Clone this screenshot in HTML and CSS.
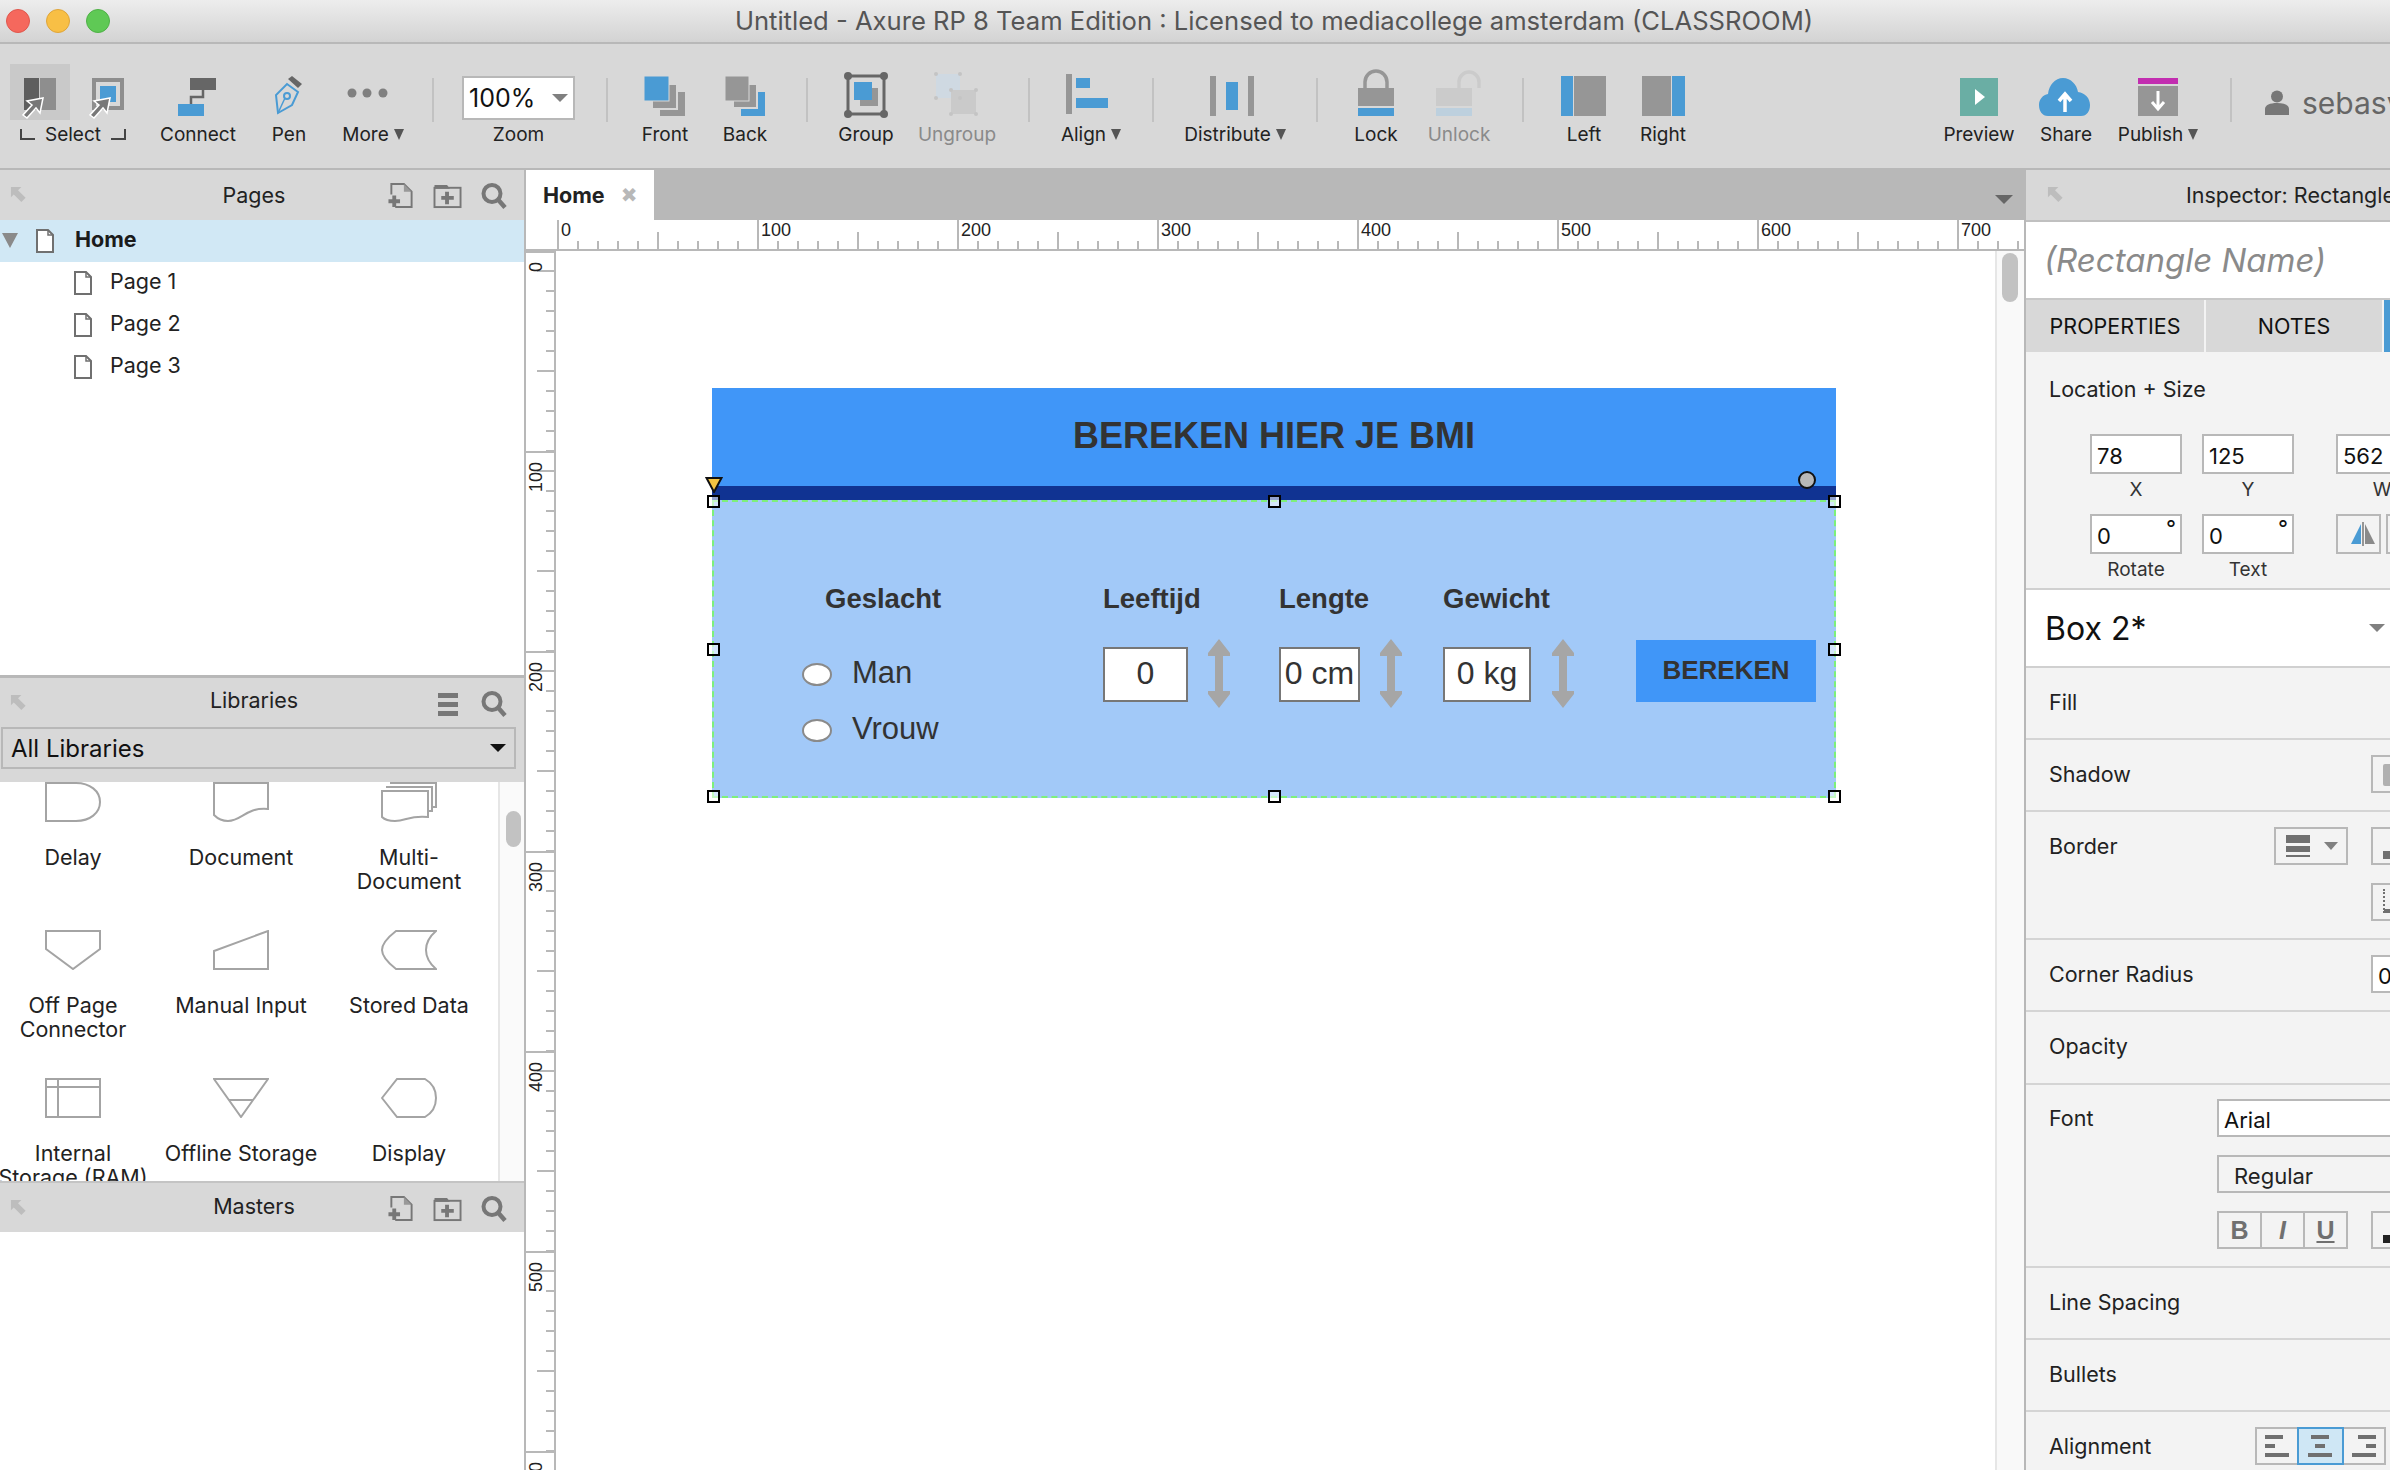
FILE: index.html
```html
<!DOCTYPE html>
<html>
<head>
    <meta charset="utf-8">
    <title>Untitled - Axure RP 8</title>
    <link rel="stylesheet" href="styles.css">
</head>
<body>
<svg class="defs" width="0" height="0">
    <symbol id="pin" viewBox="0 0 18 18"><path d="M1 1h11l-3.500 3.500 8 8-4.500 4.500-8-8L1 12z" fill="#bdbdbd"/></symbol>
    <symbol id="search" viewBox="0 0 26 26"><circle cx="11" cy="11" r="8.500" fill="none" stroke="#777" stroke-width="4"/><path d="M17 17l7 8" stroke="#777" stroke-width="4.500"/></symbol>
    <symbol id="addpage" viewBox="0 0 26 28"><path d="M3 13V2h13l8 8v16H7" fill="none" stroke="#777" stroke-width="2"/><path d="M16 2v8h8" fill="#999"/><path d="M6 14v12M0 20h12" stroke="#777" stroke-width="4"/></symbol>
    <symbol id="addfolder" viewBox="0 0 30 28"><path d="M1 3h13l3 4H1z" fill="#777"/><rect x="1" y="6" width="27" height="20" fill="none" stroke="#777" stroke-width="2"/><path d="M14 10v13M8 16.500h13" stroke="#777" stroke-width="4"/></symbol>
    <symbol id="page" viewBox="0 0 18 24"><path d="M1 1h11l5 5v17H1z" fill="#fff" stroke="#707070" stroke-width="2"/><path d="M12 1v5h5" fill="none" stroke="#707070" stroke-width="1.500"/></symbol>
    <symbol id="cursor" viewBox="0 0 24 24"><path d="M22 1l-3 15-4-5-9 10-4-3 9-10-5-4z" fill="#777" stroke="#fff" stroke-width="1.500"/></symbol>
    <symbol id="updown" viewBox="0 0 22 69"><path d="M11 0l11 14v3h-7v35h7v3L11 69 0 55v-3h7V17H0v-3z" fill="#a6a6a6"/></symbol>
</svg>

<div class="titlebar">
    <div class="lights"><i class="light red"></i><i class="light yellow"></i><i class="light green"></i></div>
    <div class="title">Untitled - Axure RP 8 Team Edition : Licensed to mediacollege amsterdam (CLASSROOM)</div>
</div>

<div class="toolbar">
    <div class="tool tool-select">
        <div class="sel-icons">
            <div class="sel-btn active">
                <svg width="60" height="56"><rect x="14" y="14" width="15" height="32" fill="#5e5e5e"/><rect x="30" y="14" width="16" height="32" fill="#8e8e8e"/><use href="#cursor" x="11" y="33" width="24" height="24"/></svg>
            </div>
            <div class="sel-btn">
                <svg width="60" height="56"><rect x="24" y="16" width="28" height="28" fill="none" stroke="#8e8e8e" stroke-width="4"/><rect x="30" y="22" width="16" height="16" fill="#4a9bd4"/><use href="#cursor" x="18" y="33" width="24" height="24"/></svg>
            </div>
        </div>
        <div class="sel-label"><i class="corner"></i><span class="tool-label">Select</span><i class="corner corner-r"></i></div>
    </div>
    <div class="tool">
        <svg width="60" height="56"><rect x="22" y="14" width="26" height="12" fill="#666"/><path d="M35 26v7H23v8" fill="none" stroke="#666" stroke-width="2.500"/><rect x="10" y="40" width="26" height="12" fill="#4a9bd4"/></svg>
        <span class="tool-label">Connect</span>
    </div>
    <div class="tool">
        <svg width="60" height="56"><path d="M19 49l-2-18 11-11 11 8-6 13z" fill="none" stroke="#4a9bd4" stroke-width="2"/><circle cx="28" cy="32" r="3" fill="none" stroke="#4a9bd4" stroke-width="2"/><path d="M19 49l7-15" stroke="#4a9bd4" stroke-width="1.500"/><path d="M29 15l4-3 10 8-4 4z" fill="#666"/></svg>
        <span class="tool-label">Pen</span>
    </div>
    <div class="tool">
        <svg width="60" height="56"><circle cx="9" cy="29" r="4.500" fill="#808080"/><circle cx="24" cy="29" r="4.500" fill="#808080"/><circle cx="40" cy="29" r="4.500" fill="#808080"/></svg>
        <span class="tool-label">More<i class="caret"></i></span>
    </div>
    <i class="sep"></i>
    <div class="tool">
        <div class="zoom-box"><span>100%</span><i class="drop"></i></div>
        <span class="tool-label">Zoom</span>
    </div>
    <i class="sep"></i>
    <div class="tool">
        <svg width="60" height="56"><rect x="25" y="28" width="25" height="24" fill="#969696"/><rect x="17" y="20" width="25" height="25" fill="#969696" stroke="#d8d8d8" stroke-width="2"/><rect x="9" y="12" width="25" height="25" fill="#4a9bd4" stroke="#d8d8d8" stroke-width="1"/></svg>
        <span class="tool-label">Front</span>
    </div>
    <div class="tool">
        <svg width="60" height="56"><rect x="26" y="28" width="24" height="24" fill="#4a9bd4"/><rect x="18" y="20" width="24" height="24" fill="#969696" stroke="#d8d8d8" stroke-width="2"/><rect x="10" y="12" width="24" height="25" fill="#969696" stroke="#d8d8d8" stroke-width="1"/></svg>
        <span class="tool-label">Back</span>
    </div>
    <i class="sep"></i>
    <div class="tool">
        <svg width="60" height="56"><rect x="24" y="24" width="18" height="18" fill="#969696"/><rect x="18" y="18" width="18" height="18" fill="#4a9bd4"/><rect x="12" y="12" width="36" height="38" fill="none" stroke="#666" stroke-width="3"/><circle cx="12" cy="12" r="4" fill="#666"/><circle cx="48" cy="12" r="4" fill="#666"/><circle cx="12" cy="50" r="4" fill="#666"/><circle cx="48" cy="50" r="4" fill="#666"/></svg>
        <span class="tool-label">Group</span>
    </div>
    <div class="tool">
        <svg width="60" height="56"><rect x="9" y="10" width="24" height="24" fill="#cfd9e2"/><rect x="24" y="26" width="25" height="24" fill="#cacaca"/><g fill="#c4c4c4"><circle cx="9" cy="10" r="2"/><circle cx="33" cy="10" r="2"/><circle cx="9" cy="34" r="2"/><circle cx="33" cy="34" r="2"/><circle cx="24" cy="26" r="2"/><circle cx="49" cy="26" r="2"/><circle cx="24" cy="50" r="2"/><circle cx="49" cy="50" r="2"/></g></svg>
        <span class="tool-label off">Ungroup</span>
    </div>
    <i class="sep"></i>
    <div class="tool">
        <svg width="60" height="56"><rect x="5" y="10" width="6" height="40" fill="#969696"/><rect x="15" y="14" width="14" height="10" fill="#4a9bd4"/><rect x="15" y="34" width="32" height="10" fill="#4a9bd4"/></svg>
        <span class="tool-label">Align<i class="caret"></i></span>
    </div>
    <i class="sep"></i>
    <div class="tool">
        <svg width="60" height="56"><rect x="5" y="12" width="6" height="40" fill="#969696"/><rect x="43" y="12" width="6" height="40" fill="#969696"/><rect x="21" y="18" width="12" height="28" fill="#4a9bd4"/></svg>
        <span class="tool-label">Distribute<i class="caret"></i></span>
    </div>
    <i class="sep"></i>
    <div class="tool">
        <svg width="60" height="56"><path d="M19 26V18a11 11 0 0 1 22 0v8" fill="none" stroke="#969696" stroke-width="3.500"/><rect x="12" y="24" width="36" height="18" fill="#969696"/><rect x="12" y="44" width="36" height="8" fill="#4a9bd4"/></svg>
        <span class="tool-label">Lock</span>
    </div>
    <div class="tool">
        <svg width="60" height="56"><path d="M30 26V18a10 10 0 0 1 20 0v6" fill="none" stroke="#cbcbcb" stroke-width="3.500"/><rect x="7" y="24" width="36" height="18" fill="#cbcbcb"/><rect x="7" y="44" width="36" height="8" fill="#bdd0de"/></svg>
        <span class="tool-label off">Unlock</span>
    </div>
    <i class="sep"></i>
    <div class="tool">
        <svg width="60" height="56"><rect x="7" y="12" width="12" height="40" fill="#4a9bd4"/><rect x="20" y="12" width="32" height="40" fill="#969696"/></svg>
        <span class="tool-label">Left</span>
    </div>
    <div class="tool">
        <svg width="60" height="56"><rect x="9" y="12" width="29" height="40" fill="#969696"/><rect x="39" y="12" width="13" height="40" fill="#4a9bd4"/></svg>
        <span class="tool-label">Right</span>
    </div>
    <div></div>
    <div class="tool">
        <svg width="60" height="56"><rect x="11" y="14" width="38" height="38" fill="#6aaea4"/><path d="M26 25l10 8-10 8z" fill="#fff"/></svg>
        <span class="tool-label">Preview</span>
    </div>
    <div class="tool">
        <svg width="60" height="56"><path d="M12 52C6 52 3 47 3 41c0-6 4-10 9-11 1-9 7-16 15-16 8 0 14 7 15 14 7 1 12 6 12 13 0 6-3 11-9 11z" fill="#4a9bd4"/><path d="M29 48V32M23 37l6-7 6 7" fill="none" stroke="#fff" stroke-width="3.500"/></svg>
        <span class="tool-label">Share</span>
    </div>
    <div class="tool">
        <svg width="60" height="56"><rect x="10" y="14" width="40" height="6" fill="#c22db0"/><rect x="10" y="22" width="40" height="30" fill="#969696"/><path d="M30 27v18M24 38l6 7 6-7" fill="none" stroke="#fff" stroke-width="3"/></svg>
        <span class="tool-label">Publish<i class="caret"></i></span>
    </div>
    <i class="sep"></i>
    <div class="user">
        <svg width="26" height="26" viewBox="0 0 26 26"><circle cx="13" cy="6.500" r="6" fill="#777"/><path d="M1 25v-6c0-4 5-6 12-6s12 2 12 6v6z" fill="#777"/></svg>
        <span>sebasv</span>
    </div>
</div>

<div class="main">
    <div class="left">
        <div class="panel-head">
            <svg class="pin"><use href="#pin"/></svg>
            <span class="panel-title">Pages</span>
            <svg class="hd-ico ico-a"><use href="#addpage"/></svg>
            <svg class="hd-ico ico-b"><use href="#addfolder"/></svg>
            <svg class="hd-ico ico-c"><use href="#search"/></svg>
        </div>
        <div class="pages">
            <div class="page-row home"><i class="tree-arrow"></i><svg class="page-ico"><use href="#page"/></svg><b>Home</b></div>
            <div class="page-row sub"><svg class="page-ico"><use href="#page"/></svg>Page 1</div>
            <div class="page-row sub"><svg class="page-ico"><use href="#page"/></svg>Page 2</div>
            <div class="page-row sub"><svg class="page-ico"><use href="#page"/></svg>Page 3</div>
        </div>

        <div class="panel-head lib-head">
            <svg class="pin"><use href="#pin"/></svg>
            <span class="panel-title">Libraries</span>
            <div class="burger hd-ico ico-b"><i></i><i></i><i></i></div>
            <svg class="hd-ico ico-c"><use href="#search"/></svg>
        </div>
        <div class="lib-select-wrap">
            <div class="lib-select">All Libraries<i class="blackdrop"></i></div>
        </div>
        <div class="lib-list">
            <div class="lib-grid">
                <div class="lib-item">
                    <svg width="56" height="40"><path d="M1 1h30c14 0 24 8 24 19s-10 19-24 19H1z" class="shape"/></svg>
                    <span>Delay</span>
                </div>
                <div class="lib-item">
                    <svg width="56" height="40"><path d="M1 1h54v26c-22-2-26 12-40 12-6 0-10-2-14-6z" class="shape"/></svg>
                    <span>Document</span>
                </div>
                <div class="lib-item">
                    <svg width="56" height="40"><path d="M9 1h46v24h-4M5 5h46v24h-4" class="shape"/><path d="M1 9h46v26c-18-2-22 4-33 4-6 0-10-1-13-4z" class="shape"/></svg>
                    <span>Multi-<br>Document</span>
                </div>
                <div class="lib-item">
                    <svg width="56" height="40"><path d="M1 1h54v18L28 39 1 19z" class="shape"/></svg>
                    <span>Off Page<br>Connector</span>
                </div>
                <div class="lib-item">
                    <svg width="56" height="40"><path d="M1 21L55 1v38H1z" class="shape"/></svg>
                    <span>Manual Input</span>
                </div>
                <div class="lib-item">
                    <svg width="56" height="40"><path d="M55 1H15C6 8 1 14 1 20s5 12 14 19h40c-7-6-10-12-10-19s3-13 10-19z" class="shape"/></svg>
                    <span>Stored Data</span>
                </div>
                <div class="lib-item">
                    <svg width="56" height="40"><path d="M1 1h54v38H1zM1 9h54M13 1v38" class="shape"/></svg>
                    <span>Internal<br>Storage (RAM)</span>
                </div>
                <div class="lib-item">
                    <svg width="56" height="40"><path d="M1 1h54L28 39zM16 22h24" class="shape"/></svg>
                    <span>Offline Storage</span>
                </div>
                <div class="lib-item">
                    <svg width="56" height="40"><path d="M1 20L16 1h28c7 4 11 11 11 19s-4 15-11 19H16z" class="shape"/></svg>
                    <span>Display</span>
                </div>
            </div>
            <div class="lib-scroll"><i></i></div>
        </div>

        <div class="panel-head mast-head">
            <svg class="pin"><use href="#pin"/></svg>
            <span class="panel-title">Masters</span>
            <svg class="hd-ico ico-a"><use href="#addpage"/></svg>
            <svg class="hd-ico ico-b"><use href="#addfolder"/></svg>
            <svg class="hd-ico ico-c"><use href="#search"/></svg>
        </div>
    </div>

    <div class="center">
        <div class="tabbar">
            <div class="tab"><b>Home</b><span class="tab-x">&#10006;</span></div>
            <i class="tab-drop"></i>
        </div>
        <div class="hruler">
            <div class="ruler-corner"></div>
            <div class="hmarks">
                <div class="hmark">0</div><div class="hmark">100</div><div class="hmark">200</div><div class="hmark">300</div>
                <div class="hmark">400</div><div class="hmark">500</div><div class="hmark">600</div><div class="hmark">700</div>
            </div>
        </div>
        <div class="work">
            <div class="vruler">
                <div class="vmark"><span>0</span></div><div class="vmark"><span>100</span></div><div class="vmark"><span>200</span></div>
                <div class="vmark"><span>300</span></div><div class="vmark"><span>400</span></div><div class="vmark"><span>500</span></div><div class="vmark"><span>600</span></div>
            </div>
            <div class="canvas">
                <div class="artboard">
                    <div class="bmi-head">BEREKEN HIER JE BMI</div>
                    <div class="bmi-bar"></div>
                    <div class="bmi-box">
                        <div class="w-label l-gender">Geslacht</div>
                        <div class="w-label l-age">Leeftijd</div>
                        <div class="w-label l-len">Lengte</div>
                        <div class="w-label l-wgt">Gewicht</div>
                        <i class="w-radio r-man"></i><div class="w-opt o-man">Man</div>
                        <i class="w-radio r-vrouw"></i><div class="w-opt o-vrouw">Vrouw</div>
                        <div class="w-input i-age">0</div>
                        <div class="w-input i-len">0 cm</div>
                        <div class="w-input i-wgt">0 kg</div>
                        <svg class="w-arrow a-age"><use href="#updown"/></svg>
                        <svg class="w-arrow a-len"><use href="#updown"/></svg>
                        <svg class="w-arrow a-wgt"><use href="#updown"/></svg>
                        <div class="w-button">BEREKEN</div>
                        <i class="handle h-tl"></i><i class="handle h-tm"></i><i class="handle h-tr"></i>
                        <i class="handle h-ml"></i><i class="handle h-mr"></i>
                        <i class="handle h-bl"></i><i class="handle h-bm"></i><i class="handle h-br"></i>
                    </div>
                    <svg class="mark-tri" width="18" height="16"><path d="M1.500 1h15L9 15z" fill="#f4c542" stroke="#111" stroke-width="2"/></svg>
                    <i class="mark-dot"></i>
                </div>
                <div class="canvas-scroll"><i></i></div>
            </div>
        </div>
    </div>

    <div class="right">
        <div class="panel-head insp-head">
            <svg class="pin"><use href="#pin"/></svg>
            <span class="insp-title">Inspector: Rectangle</span>
        </div>
        <div class="name-row">(Rectangle Name)</div>
        <div class="tabs">
            <div class="itab t-prop">PROPERTIES</div>
            <div class="itab t-notes">NOTES</div>
            <div class="itab t-style"></div>
        </div>
        <div class="loc">
            <div class="loc-title">Location + Size</div>
            <div class="loc-grid">
                <div class="field"><div class="box-in">78</div><span>X</span></div>
                <div class="field"><div class="box-in">125</div><span>Y</span></div>
                <div class="field"><div class="box-in">562</div><span>W</span></div>
                <div class="field"><div class="box-in">0<sup>&#176;</sup></div><span>Rotate</span></div>
                <div class="field"><div class="box-in">0<sup>&#176;</sup></div><span>Text</span></div>
                <div class="field flip-pair">
                    <div class="icon-btn flip"><svg width="24" height="24"><path d="M10 2v20H0z" fill="#4a9bd4"/><path d="M14 2v20h10z" fill="#8a8a8a"/><path d="M12 0v24" stroke="#777" stroke-width="1.500"/></svg></div>
                    <div class="icon-btn"></div>
                </div>
            </div>
        </div>
        <div class="style-row"><span>Box 2*</span><i class="drop"></i></div>

        <div class="sec"><span class="sec-name">Fill</span></div>
        <div class="sec"><span class="sec-name">Shadow</span>
            <div class="icon-btn c-far"><i class="shadow-ico"></i></div>
        </div>
        <div class="sec sec-border"><span class="sec-name">Border</span>
            <div class="icon-btn border-drop c-mid">
                <span class="lines"><i class="l1"></i><i class="l2"></i><i class="l3"></i></span><i class="drop"></i>
            </div>
            <div class="icon-btn c-far"><i class="pen-ico"></i></div>
            <div class="icon-btn c-far row2"><i class="dots-ico"></i></div>
        </div>
        <div class="sec"><span class="sec-name">Corner Radius</span>
            <div class="box-in c-far radius">0</div>
        </div>
        <div class="sec sec-opacity"><span class="sec-name">Opacity</span></div>
        <div class="sec sec-font"><span class="sec-name">Font</span>
            <div class="font-col">
                <div class="box-in font-name">Arial</div>
                <div class="box-in font-style">Regular</div>
                <div class="font-btns">
                    <div class="biu">
                        <div class="biu-b">B</div>
                        <div class="biu-i">I</div>
                        <div class="biu-u">U</div>
                    </div>
                    <div class="icon-btn color-btn"><i class="pen-ico dark"></i></div>
                </div>
            </div>
        </div>
        <div class="sec"><span class="sec-name">Line Spacing</span></div>
        <div class="sec"><span class="sec-name">Bullets</span></div>
        <div class="sec sec-last"><span class="sec-name">Alignment</span>
            <div class="align-btns">
                <div class="al al-l"><i class="w1"></i><i class="w2"></i><i class="w3"></i></div>
                <div class="al al-c on"><i class="w1"></i><i class="w2"></i><i class="w3"></i></div>
                <div class="al al-r"><i class="w1"></i><i class="w2"></i><i class="w3"></i></div>
            </div>
        </div>
    </div>
</div>
</body>
</html>
```

FILE: styles.css
```css
*{box-sizing:border-box;}
html,body{margin:0;padding:0;height:100%;}
body{width:2390px;height:1470px;overflow:hidden;background:#fff;font-family:Inter,"Noto Sans",sans-serif;font-size:21.500px;color:#222;}
i{font-style:normal;display:block;}
.defs{position:absolute;}

/* title bar */
.titlebar{height:44px;display:flex;align-items:center;position:relative;background:linear-gradient(#ededed,#d3d3d3);border-bottom:2px solid #b8b8b8;}
.lights{display:flex;gap:16px;padding-left:6px;}
.light{width:24px;height:24px;border-radius:50%;}
.red{background:#f5685d;border:1px solid #e0574d;}
.yellow{background:#f8bf45;border:1px solid #dfa53a;}
.green{background:#5fc955;border:1px solid #4fb147;}
.title{position:absolute;left:0;right:-158px;text-align:center;font-size:25.600px;color:#555;line-height:42px;}

/* toolbar */
.toolbar{height:126px;padding:20px 0 0 10px;background:#d8d8d8;border-bottom:2px solid #b8b8b8;display:grid;align-items:start;
    grid-template-columns:136px 104px 78px 90px 30px 141px 36px 80px 80px 44px 74px 108px 36px 88px 36px 128px 36px 82px 84px 44px 78px 80px 222px 108px 66px 118px 28px 200px;}
.tool{display:flex;flex-direction:column;align-items:center;}
.tool>svg{display:block;}
.tool-label{display:flex;align-items:center;height:28px;font-size:19px;color:#222;white-space:nowrap;}
.tool-label.off{color:#8a8a8a;}
.caret{width:0;height:0;margin-left:5px;border-left:5px solid transparent;border-right:5px solid transparent;border-top:11px solid #555;}
.sep{width:2px;height:44px;margin:14px auto 0;background:#c2c2c2;}
.tool-select{align-items:flex-start;}
.sel-icons{display:flex;}
.sel-btn{width:60px;height:56px;}
.sel-btn.active{background:#c9c9c9;}
.sel-label{display:flex;align-items:center;gap:10px;padding-left:10px;}
.corner{width:15px;height:11px;border-left:2px solid #444;border-bottom:2px solid #444;}
.corner-r{border-left:0;border-right:2px solid #444;}
.zoom-box{width:113px;height:44px;margin:12px 0 0;background:#fff;border:2px solid #b8b8b8;display:flex;align-items:center;justify-content:space-between;padding:0 5px;font-size:25px;color:#111;}
.drop{width:0;height:0;border-left:8px solid transparent;border-right:8px solid transparent;border-top:8px solid #808080;}
.user{display:flex;align-items:center;gap:12px;margin:21px 0 0 19px;font-size:30px;color:#666;white-space:nowrap;}
.user svg{flex:none;}

/* main layout */
.main{display:flex;height:1300px;}
.left{width:526px;flex:none;border-right:2px solid #b8b8b8;}
.center{width:1498px;flex:none;display:flex;flex-direction:column;}
.right{width:366px;flex:none;border-left:2px solid #b8b8b8;background:#f3f3f3;overflow:hidden;}

/* panels */
.panel-head{height:50px;background:#d8d8d8;position:relative;display:flex;align-items:center;justify-content:center;}
.pin{position:absolute;left:10px;top:16px;width:17px;height:17px;}
.panel-title{font-size:21.500px;color:#222;margin-right:16px;}
.hd-ico{position:absolute;top:12px;width:26px;height:27px;}
.ico-a{left:388px;}
.ico-b{left:433px;width:30px;}
.ico-c{left:481px;}
.pages{height:455px;}
.page-row{height:42px;display:flex;align-items:center;font-size:21.500px;padding-bottom:4px;}
.page-row.home{background:#d1e8f5;padding-left:2px;color:#1b1b1b;}
.page-row.sub{height:42px;padding-left:74px;}
.page-row b{margin-left:21px;}
.page-ico{width:18px;height:24px;margin:3px 18px 0 0;flex:none;}
.home .page-ico{margin:3px 0 0;}
.tree-arrow{width:0;height:0;margin:3px 18px 0 0;border-left:8px solid transparent;border-right:8px solid transparent;border-top:15px solid #8a8a8a;}
.lib-head{border-top:3px solid #b8b8b8;height:49px;padding-bottom:3px;}
.lib-select-wrap{height:58px;background:#d8d8d8;padding:3px 8px 0 1px;}
.lib-select{height:42px;border:2px solid #b8b8b8;display:flex;align-items:center;justify-content:space-between;padding:0 8px;font-size:24px;color:#111;}
.blackdrop{width:0;height:0;border-left:8px solid transparent;border-right:8px solid transparent;border-top:8px solid #111;}
.lib-list{height:399px;display:flex;overflow:hidden;background:#fff;}
.lib-grid{width:509px;margin-left:-11px;flex:none;display:grid;grid-template-columns:168px 168px 168px;grid-auto-rows:148px;}
.lib-item{display:flex;flex-direction:column;align-items:center;text-align:center;font-size:21.500px;line-height:24px;color:#222;white-space:nowrap;}
.lib-item svg{display:block;margin-bottom:23px;flex:none;}
.shape{fill:none;stroke:#a4a4a4;stroke-width:2;}
.lib-scroll{width:26px;flex:none;background:#fafafa;border-left:2px solid #e6e6e6;padding:29px 0 0 6px;}
.lib-scroll i{width:15px;height:36px;border-radius:8px;background:#c2c2c2;}
.mast-head{border-top:2px solid #c4c4c4;height:51px;padding-bottom:3px;}
.burger i{height:5px;width:20px;margin:0 0 4px 5px;background:#777;}
.burger{padding-top:3px;}

/* tab bar and rulers */
.tabbar{height:50px;flex:none;background:#b8b8b8;display:flex;align-items:center;border-top:0;}
.tab{width:128px;height:50px;background:#fff;display:flex;align-items:center;padding-left:17px;font-size:21.500px;color:#222;}
.tab b{flex:none;}
.tab-x{margin-left:16px;color:#b8b8b8;font-size:20px;font-family:"DejaVu Sans",sans-serif;}
.tab-drop{width:0;height:0;margin:8px 11px 0 auto;border-left:9px solid transparent;border-right:9px solid transparent;border-top:9px solid #666;}
.hruler{height:31px;flex:none;display:flex;}
.ruler-corner{width:31px;flex:none;border-bottom:2px solid #b8b8b8;}
.hmarks{flex:1;display:flex;overflow:hidden;border-bottom:2px solid #b8b8b8;
    background:repeating-linear-gradient(90deg,#b8b8b8 0 2px,transparent 2px 20px) left bottom/100% 8px no-repeat,repeating-linear-gradient(90deg,#b8b8b8 0 2px,transparent 2px 100px) left bottom/100% 17px no-repeat;}
.hmark{width:200px;flex:none;border-left:2px solid #b8b8b8;padding-left:2px;font-family:"Liberation Sans",sans-serif;font-size:18px;line-height:20px;color:#222;}
.work{flex:1;display:flex;min-height:0;}
.vruler{width:30px;flex:none;border-right:2px solid #b8b8b8;overflow:hidden;padding-left:0;
    background:repeating-linear-gradient(0deg,transparent 0 18px,#b8b8b8 18px 20px) right top/8px 100% no-repeat,repeating-linear-gradient(0deg,transparent 0 98px,#b8b8b8 98px 100px) right top/17px 100% no-repeat;}
.vmark{height:200px;border-top:2px solid #b8b8b8;padding:9px 0 0 1px;}
.vmark span{display:block;width:18px;writing-mode:vertical-rl;transform:rotate(180deg);font-family:"Liberation Sans",sans-serif;font-size:18px;line-height:18px;color:#222;}

/* canvas, widgets sit at their own coordinates */
.canvas{flex:1;position:relative;background:#fff;overflow:hidden;}
.artboard{position:absolute;left:156px;top:137px;width:1124px;color:#333;font-family:"Liberation Sans",Arial,sans-serif;}
.bmi-head{height:98px;background:#4096f8;font-size:36px;font-weight:bold;line-height:96px;text-align:center;}
.bmi-bar{height:14px;background:#103392;}
.bmi-box{height:298px;position:relative;background:#a2c9f8;border:2px dashed #7ef07a;}
.w-label{position:absolute;top:81px;font-size:27.500px;line-height:32px;font-weight:bold;}
.l-gender{left:111px;}
.l-age{left:389px;}
.l-len{left:565px;}
.l-wgt{left:729px;}
.w-radio{position:absolute;left:88px;width:30px;height:23px;border-radius:50%;background:#fff;border:2px solid #8a8a8a;}
.r-man{top:161px;}
.r-vrouw{top:217px;}
.w-opt{position:absolute;font-size:31px;line-height:34px;}
.o-man{left:138px;top:154px;}
.o-vrouw{left:138px;top:210px;}
.w-input{position:absolute;top:145px;height:55px;background:#fff;border:2px solid #777;font-size:32px;line-height:49px;text-align:center;white-space:nowrap;}
.i-age{left:389px;width:85px;}
.i-len{left:565px;width:81px;}
.i-wgt{left:729px;width:88px;}
.w-arrow{position:absolute;top:137px;width:22px;height:69px;}
.a-age{left:494px;}
.a-len{left:666px;}
.a-wgt{left:838px;}
.w-button{position:absolute;left:922px;top:138px;width:180px;height:62px;background:#4096f8;font-size:26px;font-weight:bold;line-height:60px;text-align:center;}
.handle{position:absolute;width:13px;height:13px;margin:-6.500px 0 0 -6.500px;border:2px solid #000;background:rgba(255,255,255,.55);}
.h-tl{left:-1px;top:-1px;}
.h-tm{left:50%;top:-1px;}
.h-tr{left:100%;top:-1px;}
.h-ml{left:-1px;top:50%;}
.h-mr{left:100%;top:50%;}
.h-bl{left:-1px;top:100%;}
.h-bm{left:50%;top:100%;}
.h-br{left:100%;top:100%;}
.mark-tri{position:absolute;left:-7px;top:89px;}
.mark-dot{position:absolute;left:1086px;top:83px;width:18px;height:18px;border-radius:50%;background:#b8b8b8;border:2px solid #111;}
.canvas-scroll{position:absolute;right:0;top:0;bottom:0;width:29px;background:#f9f9f9;border-left:2px solid #e6e6e6;padding:2px 0 0 5px;}
.canvas-scroll i{width:16px;height:49px;border-radius:8px;background:#c2c2c2;}

/* inspector */
.insp-head{height:52px;border-bottom:2px solid #c0c0c0;justify-content:flex-start;width:500px;}
.insp-head .pin{left:21px;}
.insp-title{margin-left:160px;font-size:21.500px;color:#222;white-space:nowrap;}
.name-row{height:78px;background:#fff;border-bottom:2px solid #c8c8c8;padding-left:18px;font-size:33px;font-style:italic;line-height:76px;color:#8a8a8a;white-space:nowrap;}
.tabs{height:52px;display:flex;gap:2px;width:500px;}
.itab{background:#d8d8d8;text-align:center;font-size:21.500px;line-height:52px;color:#111;}
.t-prop{width:178px;}
.t-notes{width:176px;}
.t-style{width:100px;background:#4a9bd4;}
.loc{height:238px;padding:22px 0 0 23px;width:500px;border-bottom:2px solid #d0d0d0;}
.loc-title{font-size:21.500px;line-height:30px;}
.loc-grid{display:grid;grid-template-columns:112px 134px 112px;grid-auto-rows:80px;margin:30px 0 0 41px;}
.field{text-align:center;width:92px;font-size:19px;line-height:32px;color:#333;}
.box-in{height:40px;background:#fff;border:2px solid #b8b8b8;padding-left:5px;font-size:22px;line-height:38px;color:#111;text-align:left;white-space:nowrap;}
.field .box-in{line-height:40px;}
.box-in sup{float:right;margin-right:4px;font-size:22px;line-height:24px;}
.flip-pair{display:flex;gap:5px;width:200px;}
.icon-btn{width:45px;height:40px;border:2px solid #b8b8b8;flex:none;}
.flip{padding:6px 0 0 9px;}
.style-row{height:78px;width:364px;background:#fff;border-bottom:2px solid #d0d0d0;display:flex;align-items:center;justify-content:space-between;padding:0 5px 0 19px;font-size:32px;color:#111;}

.sec{height:72px;width:500px;padding:15px 0 0 23px;border-bottom:2px solid #d4d4d4;display:grid;grid-template-columns:168px 57px 97px 160px;grid-auto-rows:38px;row-gap:18px;font-size:21.500px;line-height:38px;color:#222;}
.sec-name{grid-column:1;}
.c-mid{grid-column:3;grid-row:1;height:38px;}
.c-far{grid-column:4;grid-row:1;height:38px;width:60px;}
.c-far.row2{grid-row:2;}
.sec-border{height:128px;}
.sec-opacity{height:73px;}
.sec-font{height:183px;padding-top:14px;}
.sec-last{border-bottom:0;}
.radius{padding-left:5px;}
.shadow-ico{width:30px;height:22px;margin:7px 0 0 10px;background:#b0b0b0;border-radius:2px;}
.border-drop{width:74px;display:flex;align-items:center;gap:14px;padding-left:10px;}
.lines i{background:#707070;width:24px;}
.lines .l1{height:8px;}
.lines .l2{height:6px;margin-top:3px;}
.lines .l3{height:2px;margin-top:3px;}
.border-drop .drop{border-left-width:7px;border-right-width:7px;}
.pen-ico{width:30px;height:8px;margin:22px 0 0 10px;background:#707070;}
.pen-ico.dark{background:#222;margin-left:10px;}
.dots-ico{width:30px;height:24px;margin:4px 0 0 10px;border-left:2px dotted #707070;border-bottom:4px solid #707070;}
.font-col{grid-column:2 / 5;grid-row:1;display:flex;flex-direction:column;gap:18px;}
.font-name{height:38px;padding-left:5px;}
.font-style{height:38px;padding-left:15px;background:#f3f3f3;color:#222;}
.font-btns{display:flex;gap:23px;}
.biu{display:flex;width:131px;height:38px;border:2px solid #b8b8b8;}
.biu div{flex:1;text-align:center;font-family:"Liberation Sans",sans-serif;color:#707070;font-size:25px;line-height:34px;border-right:2px solid #b8b8b8;}
.biu div:last-child{border-right:0;}
.biu-b{font-weight:bold;font-size:27px;}
.biu-i{font-style:italic;font-family:"Liberation Serif",serif;font-weight:bold;}
.biu-u{text-decoration:underline;font-weight:bold;font-size:21px;}
.color-btn{height:38px;width:60px;}
.align-btns{grid-column:2 / 5;display:flex;margin-left:38px;height:38px;width:131px;border:2px solid #b8b8b8;}
.al{flex:1;padding:6px 8px 0;}
.al i{height:4px;background:#707070;margin-bottom:5px;}
.al-l i{margin-right:auto;}
.al-c i{margin-left:auto;margin-right:auto;}
.al-r i{margin-left:auto;}
.w1{width:18px;}
.w2{width:10px;}
.w3{width:24px;}
.al.on{background:#cfe7f5;outline:2px solid #4a9bd4;}
```
